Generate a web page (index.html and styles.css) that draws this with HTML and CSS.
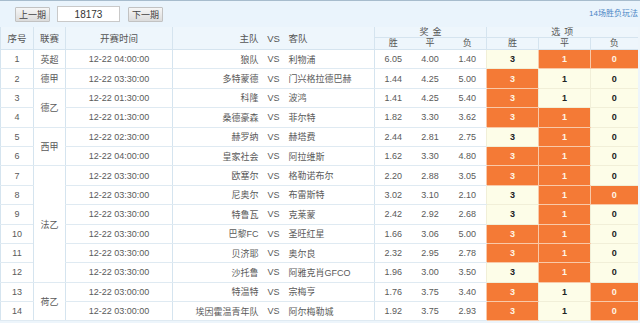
FILE: index.html
```html
<!DOCTYPE html>
<html lang="zh">
<head>
<meta charset="utf-8">
<link rel="stylesheet" href="styles.css">
</head>
<body>
<div class="wrap">
  <div class="toolbar">
    <div class="pager">
      <button class="btn">上一期</button>
      <input class="issue" type="text" value="18173">
      <button class="btn">下一期</button>
    </div>
    <a class="rule-link">14场胜负玩法</a>
  </div>
  <table class="grid">
    <colgroup>
      <col class="c-no"><col class="c-lg"><col class="c-time">
      <col class="c-home"><col class="c-vs"><col class="c-away">
      <col class="c-odd"><col class="c-odd"><col class="c-odd3">
      <col class="c-opt"><col class="c-opt"><col class="c-opt3">
    </colgroup>
    <thead>
      <tr class="h1">
        <th rowspan="2" class="bl">序号</th>
        <th rowspan="2" class="bl">联赛</th>
        <th rowspan="2" class="bl">开赛时间</th>
        <th rowspan="2" class="bl home">主队</th>
        <th rowspan="2" class="vs">VS</th>
        <th rowspan="2" class="away">客队</th>
        <th colspan="3" class="bl spaced">奖金</th>
        <th colspan="3" class="bl spaced">选项</th>
      </tr>
      <tr class="h2">
        <th class="bl">胜</th><th>平</th><th>负</th>
        <th class="bl">胜</th><th class="bl">平</th><th class="bl">负</th>
      </tr>
    </thead>
    <tbody>
      <tr><td class="bl">1</td><td class="bl">英超</td><td class="bl">12-22 04:00:00</td><td class="bl home">狼队</td><td class="vs">VS</td><td class="away">利物浦</td><td class="bl">6.05</td><td>4.00</td><td>1.40</td><td class="opt bl">3</td><td class="opt on">1</td><td class="opt on">0</td></tr>
      <tr><td class="bl">2</td><td class="bl">德甲</td><td class="bl">12-22 03:30:00</td><td class="bl home">多特蒙德</td><td class="vs">VS</td><td class="away">门兴格拉德巴赫</td><td class="bl">1.44</td><td>4.25</td><td>5.00</td><td class="opt bl on">3</td><td class="opt">1</td><td class="opt">0</td></tr>
      <tr><td class="bl">3</td><td class="bl" rowspan="2">德乙</td><td class="bl">12-22 01:30:00</td><td class="bl home">科隆</td><td class="vs">VS</td><td class="away">波鸿</td><td class="bl">1.41</td><td>4.25</td><td>5.40</td><td class="opt bl on">3</td><td class="opt">1</td><td class="opt">0</td></tr>
      <tr><td class="bl">4</td><td class="bl">12-22 01:30:00</td><td class="bl home">桑德豪森</td><td class="vs">VS</td><td class="away">菲尔特</td><td class="bl">1.82</td><td>3.30</td><td>3.62</td><td class="opt bl on">3</td><td class="opt on">1</td><td class="opt">0</td></tr>
      <tr><td class="bl">5</td><td class="bl" rowspan="2">西甲</td><td class="bl">12-22 02:30:00</td><td class="bl home">赫罗纳</td><td class="vs">VS</td><td class="away">赫塔费</td><td class="bl">2.44</td><td>2.81</td><td>2.75</td><td class="opt bl">3</td><td class="opt on">1</td><td class="opt">0</td></tr>
      <tr><td class="bl">6</td><td class="bl">12-22 04:00:00</td><td class="bl home">皇家社会</td><td class="vs">VS</td><td class="away">阿拉维斯</td><td class="bl">1.62</td><td>3.30</td><td>4.80</td><td class="opt bl on">3</td><td class="opt on">1</td><td class="opt">0</td></tr>
      <tr><td class="bl">7</td><td class="bl" rowspan="6">法乙</td><td class="bl">12-22 03:30:00</td><td class="bl home">欧塞尔</td><td class="vs">VS</td><td class="away">格勒诺布尔</td><td class="bl">2.20</td><td>2.88</td><td>3.05</td><td class="opt bl on">3</td><td class="opt on">1</td><td class="opt">0</td></tr>
      <tr><td class="bl">8</td><td class="bl">12-22 03:30:00</td><td class="bl home">尼奥尔</td><td class="vs">VS</td><td class="away">布雷斯特</td><td class="bl">3.02</td><td>3.10</td><td>2.10</td><td class="opt bl">3</td><td class="opt on">1</td><td class="opt on">0</td></tr>
      <tr><td class="bl">9</td><td class="bl">12-22 03:30:00</td><td class="bl home">特鲁瓦</td><td class="vs">VS</td><td class="away">克莱蒙</td><td class="bl">2.42</td><td>2.92</td><td>2.68</td><td class="opt bl">3</td><td class="opt on">1</td><td class="opt">0</td></tr>
      <tr><td class="bl">10</td><td class="bl">12-22 03:30:00</td><td class="bl home">巴黎FC</td><td class="vs">VS</td><td class="away">圣旺红星</td><td class="bl">1.66</td><td>3.06</td><td>5.00</td><td class="opt bl on">3</td><td class="opt on">1</td><td class="opt">0</td></tr>
      <tr><td class="bl">11</td><td class="bl">12-22 03:30:00</td><td class="bl home">贝济耶</td><td class="vs">VS</td><td class="away">奥尔良</td><td class="bl">2.32</td><td>2.95</td><td>2.78</td><td class="opt bl on">3</td><td class="opt on">1</td><td class="opt">0</td></tr>
      <tr><td class="bl">12</td><td class="bl">12-22 03:30:00</td><td class="bl home">沙托鲁</td><td class="vs">VS</td><td class="away">阿雅克肖GFCO</td><td class="bl">1.96</td><td>3.00</td><td>3.50</td><td class="opt bl">3</td><td class="opt on">1</td><td class="opt">0</td></tr>
      <tr><td class="bl">13</td><td class="bl" rowspan="2">荷乙</td><td class="bl">12-22 03:00:00</td><td class="bl home">特温特</td><td class="vs">VS</td><td class="away">宗梅亨</td><td class="bl">1.76</td><td>3.75</td><td>3.40</td><td class="opt bl on">3</td><td class="opt">1</td><td class="opt on">0</td></tr>
      <tr><td class="bl">14</td><td class="bl">12-22 03:00:00</td><td class="bl home">埃因霍温青年队</td><td class="vs">VS</td><td class="away">阿尔梅勒城</td><td class="bl">1.92</td><td>3.75</td><td>2.93</td><td class="opt bl on">3</td><td class="opt">1</td><td class="opt on">0</td></tr>
    </tbody>
  </table>
</div>
</body>
</html>
```

FILE: styles.css
```css
html, body {
  margin: 0;
  padding: 0;
  background: #ffffff;
}

body {
  font-family: "Liberation Sans", "Noto Sans CJK SC", sans-serif;
  font-size: 9px;
  color: #5a5a5a;
}

.wrap {
  width: 640px;
  height: 323px;
  overflow: hidden;
  background: #edf5fb;
  border-top: 1px solid #a7bccd;
  box-sizing: border-box;
}

.toolbar {
  height: 26px;
  display: flex;
  align-items: center;
  justify-content: space-between;
  padding: 0 2px 0 15px;
  box-sizing: border-box;
  background: #eaf4fc;
}

.pager {
  display: flex;
  align-items: center;
  gap: 7px;
  margin-top: 0;
}

.btn {
  width: 35px;
  height: 15px;
  padding: 0;
  font-family: inherit;
  font-size: 9px;
  color: #444;
  border: 1px solid #c2c2c2;
  border-radius: 1px;
  background: linear-gradient(#f6f6f6, #dcdcdc);
}

.pager .btn:last-child {
  margin-left: 1px;
}

.issue {
  width: 63px;
  height: 16px;
  padding: 0;
  box-sizing: border-box;
  border: 1px solid #c9c9c9;
  background: #fff;
  text-align: center;
  font-family: inherit;
  font-size: 10px;
  color: #333;
}

.rule-link {
  align-self: flex-start;
  margin-top: 6px;
  font-size: 8px;
  color: #4a86c5;
}

.grid {
  width: 637px;
  table-layout: fixed;
  border-collapse: collapse;
  background: #fff;
}

.c-no { width: 33px; }
.c-lg { width: 32px; }
.c-time { width: 107px; }
.c-home { width: 90px; }
.c-vs { width: 22px; }
.c-away { width: 90px; }
.c-odd { width: 37px; }
.c-odd3 { width: 38px; }
.c-opt { width: 52px; }
.c-opt3 { width: 47px; }

.grid th {
  background: #eef6fc;
  font-weight: normal;
  color: #555;
  padding: 0;
  border-bottom: 1px solid #d5e4ef;
  text-align: center;
}

.grid th.spaced {
  letter-spacing: 4px;
  text-indent: 4px;
}

.grid tr.h1 th[colspan] {
  height: 10px;
  line-height: 10px;
}

.grid tr.h1 th[rowspan] {
  font-size: 9.5px;
}

.grid tr.h2 th {
  height: 11px;
  line-height: 11px;
}

.grid td {
  height: 18.4px;
  padding: 0;
  text-align: center;
  border-bottom: 1px solid #dfeaf2;
  white-space: nowrap;
  overflow: hidden;
}

.grid .bl {
  border-left: 1px solid #d5e4ef;
}

.grid .home {
  text-align: right;
  padding-right: 4px;
}

.grid .away {
  text-align: left;
  padding-left: 4px;
}

.grid .vs {
  text-align: center;
}

.grid td.opt {
  background: #fdfde8;
  color: #222;
  font-weight: bold;
  border-left: 1px solid #f1efd8;
  border-bottom: 1px solid #f1efd8;
}

.grid td.opt.on {
  background: #f47a36;
  color: #fff6e6;
  border-left: 1px solid #f9c9a8;
  border-bottom: 1px solid #f9c9a8;
}
```
